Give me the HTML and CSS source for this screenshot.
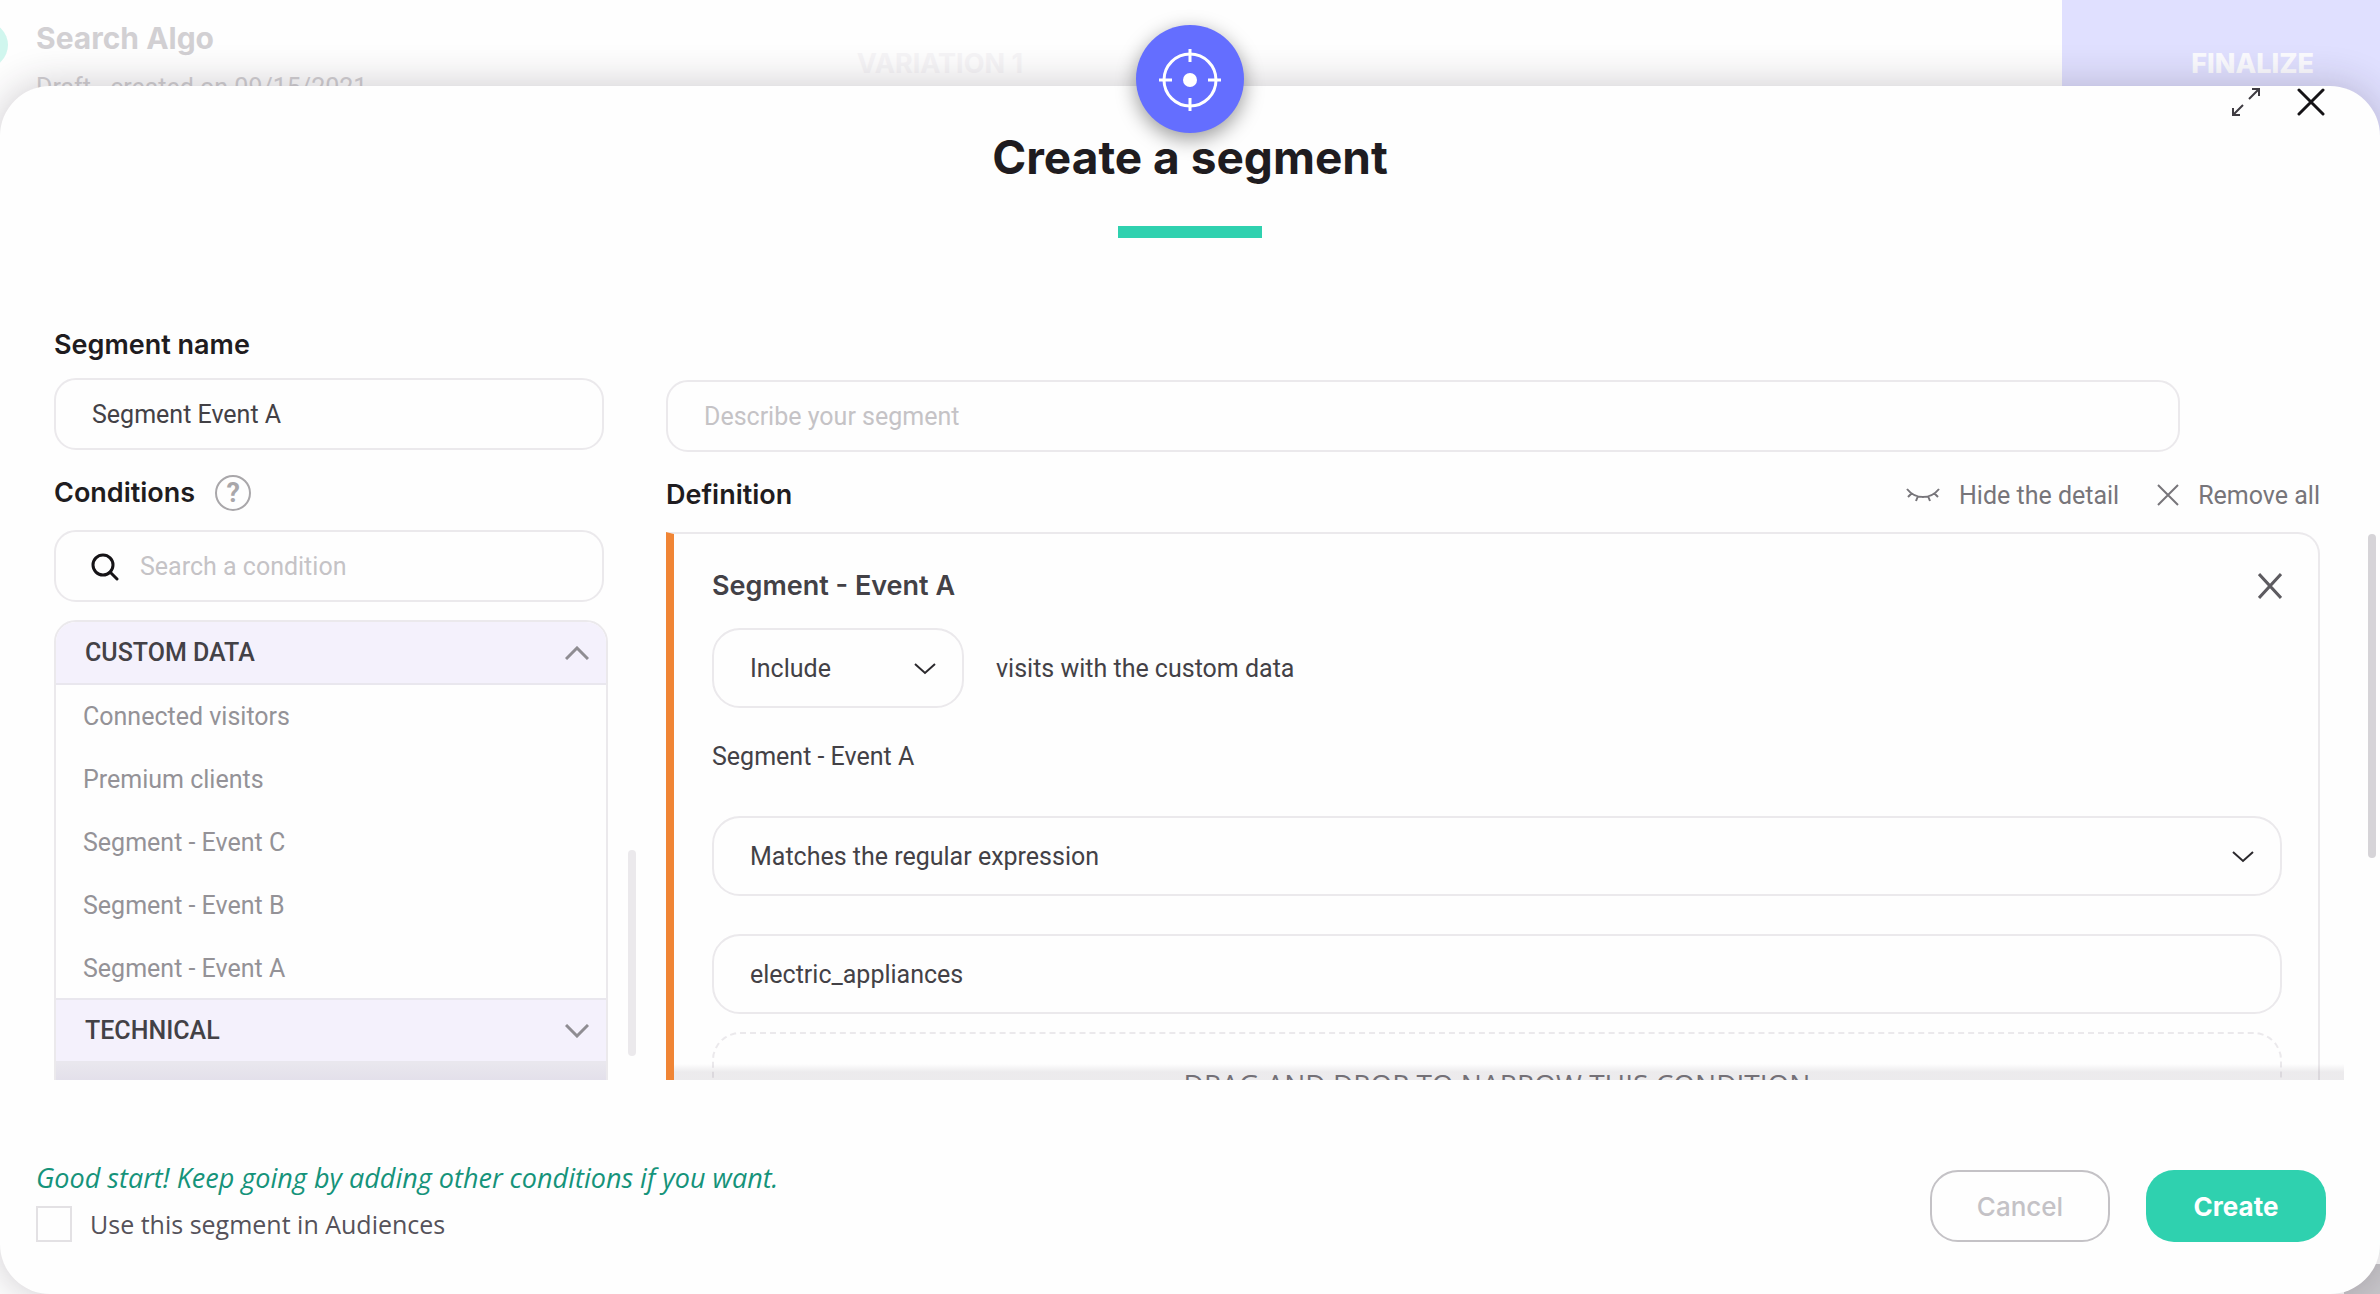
FILE: index.html
```
<!DOCTYPE html>
<html lang="en">
<head>
    <meta charset="UTF-8">
    <meta name="viewport" content="width=device-width, initial-scale=1.0">
    <title>Create a segment</title>
    <link rel="stylesheet" href="styles.css">
</head>
<body>
    <!-- Page behind the popin -->
    <header class="page-header">
        <span class="status-dot"></span>
        <div class="campaign">
            <h1>Search Algo</h1>
            <p>Draft - created on 09/15/2021</p>
        </div>
        <span class="variation">VARIATION 1</span>
        <a href="#" class="finalize">FINALIZE</a>
    </header>
    <div class="page-corner"></div>

    <!-- Popin -->
    <main class="popin">
        <div class="popin-badge">
            <svg width="64" height="64" viewBox="0 0 64 64" fill="none" stroke="#fff" stroke-width="3">
                <circle cx="32" cy="33" r="26"/>
                <path d="M32 2v13M32 51v13M1 33h13M50 33h13"/>
                <circle cx="32" cy="33" r="7" fill="#fff" stroke="none"/>
            </svg>
        </div>
        <div class="popin-tools">
            <button type="button" aria-label="Expand">
                <svg width="28" height="28" viewBox="0 0 28 28" fill="none" stroke="#3f3c42" stroke-width="2">
                    <path d="M17 11L27 1M20 1h7v7M11 17L1 27M1 20v7h7"/>
                </svg>
            </button>
            <button type="button" aria-label="Close">
                <svg width="28" height="28" viewBox="0 0 28 28" fill="none" stroke="#151316" stroke-width="3" stroke-linecap="round">
                    <path d="M2 2l24 24M26 2L2 26"/>
                </svg>
            </button>
        </div>

        <h2 class="popin-title">Create a segment</h2>

        <div class="popin-body">
            <!-- Left column -->
            <section class="sidebar">
                <label class="heading" for="segment-name">Segment name</label>
                <input class="field" type="text" id="segment-name" value="Segment Event A">

                <div class="heading-row">
                    <label class="heading" for="search">Conditions</label>
                    <button type="button" class="help" aria-label="Help">?</button>
                </div>
                <div class="search">
                    <svg width="28" height="28" viewBox="0 0 28 28" fill="none" stroke="#151316" stroke-width="3" stroke-linecap="round">
                        <circle cx="12" cy="12" r="10"/>
                        <path d="M19 19l7 7"/>
                    </svg>
                    <input class="field" type="text" id="search" placeholder="Search a condition">
                </div>

                <div class="conditions">
                    <button type="button" class="group">
                        CUSTOM DATA
                        <svg width="24" height="14" viewBox="0 0 24 14" fill="none" stroke="#8f8d92" stroke-width="3">
                            <path d="M1 13L12 2l11 11"/>
                        </svg>
                    </button>
                    <ul>
                        <li>Connected visitors</li>
                        <li>Premium clients</li>
                        <li>Segment - Event C</li>
                        <li>Segment - Event B</li>
                        <li>Segment - Event A</li>
                    </ul>
                    <button type="button" class="group">
                        TECHNICAL
                        <svg width="24" height="14" viewBox="0 0 24 14" fill="none" stroke="#8f8d92" stroke-width="3">
                            <path d="M1 1l11 11L23 1"/>
                        </svg>
                    </button>
                    <div class="group-end"></div>
                </div>
                <span class="thumb thumb-left"></span>
            </section>

            <!-- Right column -->
            <section class="definition">
                <input class="field describe" type="text" aria-label="Description" placeholder="Describe your segment">

                <div class="heading-row definition-row">
                    <h3 class="heading">Definition</h3>
                    <div class="actions">
                        <button type="button">
                            <svg width="34" height="14" viewBox="0 0 34 14" fill="none" stroke="#77757a" stroke-width="2">
                                <path d="M1 1c4 5 9 8 16 8s12-3 16-8M6 5L2 9M12 8l-2 5M22 8l2 5M28 5l4 4"/>
                            </svg>
                            Hide the detail
                        </button>
                        <button type="button">
                            <svg width="22" height="22" viewBox="0 0 22 22" fill="none" stroke="#77757a" stroke-width="2">
                                <path d="M1 1l20 20M21 1L1 21"/>
                            </svg>
                            Remove all
                        </button>
                    </div>
                </div>

                <div class="card">
                    <div class="card-head">
                        <h4>Segment - Event A</h4>
                        <button type="button" aria-label="Remove condition">
                            <svg width="24" height="26" viewBox="0 0 24 26" fill="none" stroke="#5d5b60" stroke-width="3">
                                <path d="M1 1l22 24M23 1L1 25"/>
                            </svg>
                        </button>
                    </div>
                    <div class="include-row">
                        <div class="select include">
                            <select id="include">
                                <option>Include</option>
                                <option>Exclude</option>
                            </select>
                            <svg width="22" height="12" viewBox="0 0 22 12" fill="none" stroke="#2b292d" stroke-width="2">
                                <path d="M1 1l10 9L21 1"/>
                            </svg>
                        </div>
                        <label for="include">visits with the custom data</label>
                    </div>
                    <label class="data-name" for="operator">Segment - Event A</label>
                    <div class="select">
                        <select id="operator">
                            <option>Matches the regular expression</option>
                            <option>Is exactly</option>
                        </select>
                        <svg width="22" height="12" viewBox="0 0 22 12" fill="none" stroke="#2b292d" stroke-width="2">
                            <path d="M1 1l10 9L21 1"/>
                        </svg>
                    </div>
                    <input class="field value" type="text" aria-label="Value" value="electric_appliances">
                    <div class="drop-zone">DRAG AND DROP TO NARROW THIS CONDITION</div>
                </div>
                <span class="card-shadow"></span>
                <span class="thumb thumb-right"></span>
            </section>
        </div>

        <footer class="popin-footer">
            <div>
                <p class="hint">Good start! Keep going by adding other conditions if you want.</p>
                <label class="audiences">
                    <input type="checkbox">
                    Use this segment in Audiences
                </label>
            </div>
            <div class="buttons">
                <button type="button" class="cancel">Cancel</button>
                <button type="button" class="create">Create</button>
            </div>
        </footer>
    </main>
</body>
</html>
```

FILE: styles.css
```
* {
    box-sizing: border-box;
}

body {
    margin: 0;
    height: 100vh;
    overflow: hidden;
    position: relative;
    background-color: #fefefe;
    font-family: Roboto, sans-serif;
    font-size: 25px;
    color: #434146;
}

h1, h2, h3, h4, p, ul {
    margin: 0;
    padding: 0;
}

button {
    font: inherit;
    color: inherit;
    background: none;
    border: none;
    padding: 0;
    cursor: pointer;
}

svg {
    display: block;
    flex: none;
}

/* Page behind the popin */
.page-header {
    display: flex;
    align-items: flex-start;
    justify-content: space-between;
    height: 140px;
    position: relative;
}

.status-dot {
    position: absolute;
    left: -38px;
    top: 22px;
    width: 46px;
    height: 46px;
    border-radius: 50%;
    background-color: #d0f6ee;
}

.campaign {
    padding: 20px 0 0 36px;
    color: #d2d0d3;
}

.campaign h1 {
    font-family: Inter, sans-serif;
    font-size: 30px;
    line-height: 36px;
    font-weight: 700;
}

.campaign p {
    margin-top: 16px;
    line-height: 32px;
}

.variation {
    position: absolute;
    left: 36%;
    top: 48px;
    font-family: Inter, sans-serif;
    font-size: 27px;
    line-height: 32px;
    font-weight: 700;
    color: #f6f5f7;
}

.finalize {
    width: 318px;
    height: 100%;
    padding: 48px 66px 0 0;
    text-align: right;
    font-family: Inter, sans-serif;
    font-size: 27px;
    line-height: 32px;
    font-weight: 800;
    color: #fbfbff;
    text-decoration: none;
    background-color: #e0e0ff;
}

.page-corner {
    position: absolute;
    right: 0;
    bottom: 0;
    width: 36px;
    height: 30px;
    background-color: #c9c7cb;
}

/* Popin */
.popin {
    position: absolute;
    top: 86px;
    left: 0;
    right: 0;
    bottom: 0;
    display: flex;
    flex-direction: column;
    background-color: #fefefe;
    border-radius: 50px;
    box-shadow: 0 0 40px rgba(40, 30, 45, 0.24);
}

.popin-badge {
    position: absolute;
    top: -61px;
    left: 50%;
    margin-left: -54px;
    width: 108px;
    height: 108px;
    display: flex;
    align-items: center;
    justify-content: center;
    border-radius: 50%;
    background-color: #646eff;
    box-shadow: 0 6px 20px rgba(0, 0, 0, 0.4);
}

.popin-tools {
    position: absolute;
    top: 2px;
    right: 55px;
    display: flex;
    gap: 37px;
}

.popin-title {
    position: relative;
    padding-top: 44px;
    text-align: center;
    font-family: Inter, sans-serif;
    font-size: 46px;
    line-height: 54px;
    font-weight: 700;
    color: #1f1c20;
}

.popin-title::after {
    content: "";
    display: block;
    width: 144px;
    height: 12px;
    margin: 42px auto 0;
    background-color: #2fd1af;
}

.popin-body {
    flex: 1;
    min-height: 0;
    display: grid;
    grid-template-columns: 554px 1fr;
    gap: 58px;
    padding: 90px 60px 0 54px;
    overflow: hidden;
    position: relative;
}

.sidebar,
.definition {
    min-width: 0;
}

.heading {
    display: block;
    font-family: Inter, sans-serif;
    font-size: 27px;
    line-height: 34px;
    font-weight: 600;
    color: #1f1c20;
}

.heading-row {
    display: flex;
    align-items: center;
    height: 38px;
    margin-top: 24px;
}

.field {
    display: block;
    width: 100%;
    height: 72px;
    padding: 0 36px;
    border: 2px solid #ebe9ec;
    border-radius: 22px;
    background-color: #fefefe;
    font: inherit;
    color: #434146;
    outline: none;
}

.field::placeholder {
    color: #c5c3c6;
    opacity: 1;
}

.sidebar .field {
    width: 550px;
    margin-top: 16px;
}

.help {
    width: 36px;
    height: 36px;
    margin-left: 20px;
    border: 2px solid #a9a7aa;
    border-radius: 50%;
    font-size: 27px;
    font-weight: 700;
    line-height: 32px;
    color: #a9a7aa;
}

.search {
    position: relative;
    margin-top: 18px;
}

.search svg {
    position: absolute;
    left: 37px;
    top: 23px;
}

.search .field {
    margin: 0;
    padding-left: 84px;
}

.conditions {
    margin-top: 18px;
    border: 2px solid #ebe9ec;
    border-radius: 22px 22px 0 0;
    overflow: hidden;
}

.group {
    display: flex;
    align-items: center;
    justify-content: space-between;
    width: 100%;
    height: 63px;
    padding: 0 17px 0 29px;
    border-bottom: 2px solid #e9e7ee;
    background-color: #f4f1fc;
    font-weight: 500;
}

.conditions ul {
    list-style: none;
    color: #949297;
}

.conditions li {
    height: 63px;
    padding-left: 27px;
    line-height: 63px;
}

.conditions li:last-child {
    border-bottom: 2px solid #e9e7ee;
}

.group-end {
    height: 20px;
    background: linear-gradient(#e9e7ee, #e2dfea);
}

/* Right column */
.describe {
    width: calc(100% - 140px);
    margin-top: 52px;
}

.definition-row {
    justify-content: space-between;
    margin-top: 24px;
}

.actions {
    display: flex;
    gap: 38px;
    color: #77757a;
}

.actions button {
    display: flex;
    align-items: center;
    gap: 19px;
}

.card {
    margin-top: 18px;
    padding: 32px 36px 0 38px;
    height: 700px;
    border: 2px solid #ebe9ec;
    border-left: 8px solid #f08535;
    border-radius: 0 22px 22px 0;
}

.card-head {
    display: flex;
    align-items: center;
    justify-content: space-between;
    height: 40px;
}

.card-head h4 {
    font-family: Inter, sans-serif;
    font-size: 27px;
    line-height: 34px;
    font-weight: 600;
}

.include-row {
    display: flex;
    align-items: center;
    gap: 32px;
    margin-top: 22px;
}

.select {
    position: relative;
}

.include {
    width: 252px;
}

.select select {
    display: block;
    width: 100%;
    height: 80px;
    padding: 0 70px 0 36px;
    border: 2px solid #ebe9ec;
    border-radius: 28px;
    background-color: #fefefe;
    font: inherit;
    color: inherit;
    appearance: none;
    outline: none;
}

.select svg {
    position: absolute;
    right: 28px;
    top: 35px;
    pointer-events: none;
}

.data-name {
    display: block;
    margin: 32px 0 42px;
    line-height: 34px;
}

.value {
    height: 80px;
    margin-top: 38px;
    border-radius: 28px;
}

.drop-zone {
    height: 120px;
    margin-top: 18px;
    padding-top: 32px;
    border: 2px dashed #ebe9ec;
    border-radius: 28px;
    text-align: center;
    font-family: "Open Sans", sans-serif;
    font-size: 28px;
    line-height: 36px;
    color: #77757a;
}

.card-shadow {
    position: absolute;
    left: 674px;
    right: 36px;
    bottom: 0;
    height: 16px;
    background: linear-gradient(rgba(80, 65, 85, 0), rgba(80, 65, 85, 0.1) 50%);
}

.thumb {
    position: absolute;
    width: 8px;
    border-radius: 4px;
    background-color: #ebe9ec;
}

.thumb-left {
    left: 628px;
    bottom: 24px;
    height: 206px;
}

.thumb-right {
    right: 4px;
    bottom: 222px;
    height: 324px;
    background-color: #d6d4d8;
}

/* Footer */
.popin-footer {
    display: flex;
    align-items: flex-start;
    justify-content: space-between;
    height: 214px;
    padding: 80px 54px 0 36px;
    font-family: "Open Sans", sans-serif;
}

.hint {
    font-size: 27px;
    line-height: 36px;
    font-style: italic;
    color: #15937a;
}

.audiences {
    display: flex;
    align-items: center;
    gap: 18px;
    height: 36px;
    margin-top: 10px;
    color: #55525a;
}

.audiences input {
    width: 36px;
    height: 36px;
    margin: 0;
    border: 2px solid #e3e1e4;
    background-color: #fefefe;
    appearance: none;
}

.buttons {
    display: flex;
    gap: 36px;
    padding-top: 10px;
}

.buttons button {
    width: 180px;
    height: 72px;
    border-radius: 28px;
    font-family: Inter, sans-serif;
    font-size: 26px;
    font-weight: 500;
}

.buttons .cancel {
    border: 2px solid #c4c2c6;
    color: #c4c2c6;
}

.buttons .create {
    background-color: #2fd1af;
    color: #fff;
    font-weight: 700;
}
```
